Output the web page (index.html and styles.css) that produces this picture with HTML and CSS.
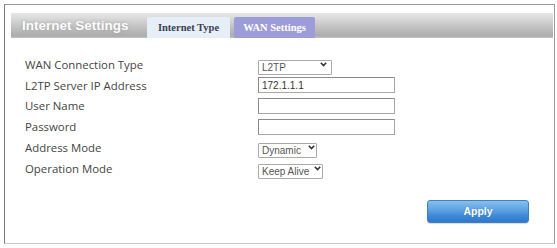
FILE: index.html
```html
<!DOCTYPE html>
<html>
<head>
<meta charset="utf-8">
<link rel="stylesheet" href="styles.css">
</head>
<body>
<div class="panel">
  <div class="header">
    <div class="title">Internet Settings</div>
    <div class="tab tab-light">Internet Type</div>
    <div class="tab tab-active">WAN Settings</div>
  </div>
  <div class="form">
    <div class="label">WAN Connection Type</div>
    <div class="field"><span class="sel sel-l2tp"><select><option>L2TP</option></select><svg class="chev" width="7" height="5" viewBox="0 0 7 5"><path d="M0.8 0.8 L3.5 3.6 L6.2 0.8" fill="none" stroke="#333" stroke-width="1.6"/></svg></span></div>
    <div class="label">L2TP Server IP Address</div>
    <div class="field"><input class="txt" type="text" value="172.1.1.1"></div>
    <div class="label">User Name</div>
    <div class="field"><input class="txt" type="text" value=""></div>
    <div class="label">Password</div>
    <div class="field"><input class="txt" type="password" value=""></div>
    <div class="label">Address Mode</div>
    <div class="field"><span class="sel sel-dyn"><select><option>Dynamic</option></select><svg class="chev" width="7" height="5" viewBox="0 0 7 5"><path d="M0.8 0.8 L3.5 3.6 L6.2 0.8" fill="none" stroke="#333" stroke-width="1.6"/></svg></span></div>
    <div class="label">Operation Mode</div>
    <div class="field"><span class="sel sel-keep"><select><option>Keep Alive</option></select><svg class="chev" width="7" height="5" viewBox="0 0 7 5"><path d="M0.8 0.8 L3.5 3.6 L6.2 0.8" fill="none" stroke="#333" stroke-width="1.6"/></svg></span></div>
  </div>
  <div class="actions">
    <button class="apply">Apply</button>
  </div>
</div>
</body>
</html>
```
FILE: styles.css
```css
html, body {
  margin: 0;
  padding: 0;
  background: #ffffff;
}
.panel {
  box-sizing: border-box;
  width: 551px;
  height: 240px;
  margin: 4px 0 0 4px;
  border: 1px solid #9a9a9a;
  border-left-color: #7c7c7c;
  border-bottom-color: #c8c8c8;
  padding: 8px 1px 0 6px;
}
.header {
  height: 25px;
  display: flex;
  align-items: flex-end;
  background: linear-gradient(to bottom, #e8e8e8 0%, #d0d0d0 35%, #b6b6b6 75%, #acacac 92%, #c4c4c4 100%);
}
.title {
  box-sizing: border-box;
  width: 136px;
  height: 25px;
  padding-left: 11px;
  padding-top: 1px;
  line-height: 24px;
  font-family: "Liberation Sans", Arial, sans-serif;
  font-weight: bold;
  font-size: 13.5px;
  color: #fbfbfb;
  text-shadow: 0 0 3px rgba(150,150,150,0.7);
  white-space: nowrap;
}
.tab {
  box-sizing: border-box;
  height: 21px;
  line-height: 22px;
  text-align: center;
  font-family: "Liberation Serif", "Times New Roman", serif;
  font-weight: bold;
  font-size: 10.5px;
  border-radius: 2px 2px 0 0;
  margin-right: 4px;
}
.tab-light {
  width: 83px;
  background: #e6eef8;
  color: #3a3f52;
}
.tab-active {
  width: 81px;
  background: #9c9cd8;
  color: #ffffff;
}
.form {
  display: grid;
  grid-template-columns: 233px auto;
  grid-auto-rows: 20.8px;
  padding: 16px 0 0 14px;
}
.label {
  display: flex;
  align-items: center;
  font-family: "Open Sans", "Liberation Sans", sans-serif;
  font-size: 11.4px;
  color: #444444;
  white-space: nowrap;
}
.field {
  display: flex;
  align-items: center;
}
.txt {
  box-sizing: border-box;
  width: 137px;
  height: 16px;
  margin: 0;
  padding: 0 3px;
  border: 1px solid #a8a8a8;
  border-top-color: #8a8a8a;
  border-left-color: #8a8a8a;
  font-family: "Liberation Sans", Arial, sans-serif;
  font-size: 10px;
  color: #333;
  background: #fff;
  outline: none;
}
.sel {
  position: relative;
  display: inline-block;
  height: 15px;
}
.sel select {
  box-sizing: border-box;
  appearance: none;
  -webkit-appearance: none;
  height: 15px;
  margin: 0;
  padding: 0 0 0 3px;
  border: 1px solid #aaaaaa;
  border-radius: 1px;
  background: #ffffff;
  font-family: "Liberation Sans", Arial, sans-serif;
  font-size: 10px;
  line-height: 13px;
  color: #555;
  outline: none;
}
.sel-l2tp select { width: 74px; }
.sel-dyn select { width: 59px; }
.sel-keep select { width: 65px; }
.chev {
  position: absolute;
  top: 5px;
}
.sel-l2tp .chev { left: 62px; }
.sel-dyn .chev { left: 50px; }
.sel-keep .chev { left: 56px; }
.actions {
  display: flex;
  justify-content: flex-end;
  padding: 21px 24px 0 0;
}
.apply {
  box-sizing: border-box;
  width: 102px;
  height: 23px;
  margin: 0;
  padding: 0;
  border: 1px solid #3f7fc4;
  border-radius: 3px;
  background: linear-gradient(to bottom, #86c0ee 0%, #5aa0e2 45%, #3a86d6 75%, #2f78cc 100%);
  color: #ffffff;
  font-family: "Liberation Sans", Arial, sans-serif;
  font-weight: bold;
  font-size: 10.5px;
  text-shadow: 0 0 1px rgba(40,80,140,0.5);
  box-shadow: 0 1px 1px rgba(0,0,0,0.15);
}
```
